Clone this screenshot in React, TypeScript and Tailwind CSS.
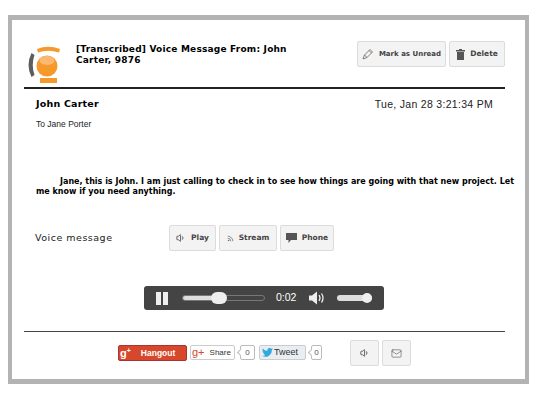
import { Rss, Volume1, Mail } from "lucide-react";
import type { ReactNode } from "react";

const sans = "font-['Liberation_Sans',Arial,sans-serif]";
const deja = "font-['DejaVu_Sans',Verdana,sans-serif]";

function ActionButton({ className, children }: { className: string; children: ReactNode }) {
  return (
    <div
      className={`flex items-center justify-center gap-[5px] rounded-[2px] border border-[#dcdcdc] bg-[#f3f3f3] font-bold whitespace-nowrap text-[#444] ${deja} ${className}`}
    >
      {children}
    </div>
  );
}

function Logo() {
  return (
    <svg width="34" height="37" viewBox="0 0 34 37" className="shrink-0">
      <path d="M9 3 Q20 -1.500 32 3 L31 6.500 Q20 3 10 6.500 Z" fill="#f39a2a" />
      <path d="M3.500 7 Q-2.500 19 3.500 31 L6.500 29 Q3 19 6.500 9 Z" fill="#5d5d5d" />
      <circle cx="19" cy="20" r="10.500" fill="#f7982a" />
      <ellipse cx="19" cy="14.500" rx="7.500" ry="4.500" fill="#fbb870" />
      <rect x="12" y="32" width="17" height="5" fill="#f39a2a" />
    </svg>
  );
}

function PencilIcon() {
  return (
    <svg width="12" height="12" viewBox="0 0 12 12" fill="none" stroke="#666" strokeWidth="0.800">
      <path d="M1 11 L2.500 7 L8 1.500 L10.500 4 L5 9.500 Z M2.500 7 L5 9.500 M7 2.500 L9.500 5" />
    </svg>
  );
}

function TrashIcon() {
  return (
    <svg width="9" height="11" viewBox="0 0 9 11" fill="#555">
      <rect x="3" y="0" width="3" height="1" />
      <rect x="0" y="1" width="9" height="1.500" />
      <rect x="1" y="3" width="7" height="8" />
    </svg>
  );
}

function PhoneBubbleIcon() {
  return (
    <svg width="11" height="10" viewBox="0 0 11 10" fill="#555">
      <path d="M0 0h11v7H5L2.500 10V7H0z" />
    </svg>
  );
}

function TwitterBird() {
  return (
    <svg width="11" height="9" viewBox="0 0 24 20">
      <path
        d="M24 2.400c-.9.400-1.800.700-2.800.800 1-.6 1.800-1.500 2.200-2.700-1 .6-2 1-3.100 1.200A4.900 4.900 0 0 0 11.900 6.200C7.800 6 4.200 4 1.700.9a4.900 4.900 0 0 0 1.500 6.600c-.8 0-1.600-.2-2.200-.6 0 2.400 1.700 4.400 3.900 4.900-.7.200-1.500.2-2.200.1.600 2 2.400 3.400 4.600 3.400A9.900 9.900 0 0 1 0 17.300 14 14 0 0 0 21.500 4.900c1-.7 1.900-1.500 2.500-2.500z"
        fill="#2fa9e0"
      />
    </svg>
  );
}

function Bubble({ n, className }: { n: string; className: string }) {
  return (
    <div
      className={`relative flex h-[15px] items-center justify-center rounded-[2px] border border-[#bbb] bg-white text-[8px] text-[#555] ${className}`}
    >
      <span className="absolute top-[4px] left-[-3px] size-[5px] rotate-45 border-b border-l border-[#bbb] bg-white" />
      <span className="relative">{n}</span>
    </div>
  );
}

export default function App() {
  return (
    <div className={`h-[400px] w-[539px] bg-white pt-[15px] pl-2 ${sans}`}>
      <div className="flex h-[369px] w-[521px] flex-col border-x-4 border-y-[5px] border-[#b3b3b3] bg-white pt-[15px] pr-[20px] pl-3">
        <div className="flex h-[54px] items-start border-b-2 border-[#222] pl-1">
          <div className="mt-[11px]">
            <Logo />
          </div>
          <div className={`mt-[9px] ml-[14px] w-[222px] text-[9px] leading-[11px] font-bold tracking-[0.2px] text-black ${deja}`}>
            [Transcribed] Voice Message From: John Carter, 9876
          </div>
          <div className="ml-auto flex gap-[3px]">
            <ActionButton className="mt-[6px] h-[26px] w-[89px] text-[7px]">
              <PencilIcon />
              Mark as Unread
            </ActionButton>
            <ActionButton className="mt-[6px] h-[26px] w-[56px] text-[7.500px]">
              <TrashIcon />
              Delete
            </ActionButton>
          </div>
        </div>

        <div className="flex items-start justify-between pt-[9px] pr-[12px] pl-[12px]">
          <div className={`text-[9.500px] leading-[12px] font-bold tracking-[0.2px] text-black ${deja}`}>John Carter</div>
          <div className="text-[10.500px] leading-[12px] tracking-[0.3px] text-[#222]">Tue, Jan 28 3:21:34 PM</div>
        </div>
        <div className="mt-[9px] pl-[12px] text-[8.500px] leading-[10px] text-[#222]">To Jane Porter</div>

        <p className={`mt-[48px] w-[496px] pl-[12px] indent-[24px] text-[8px] leading-[10px] font-bold text-black ${deja}`}>
          Jane, this is John. I am just calling to check in to see how things are going with that new project. Let me know if you need anything.
        </p>

        <div className="mt-[28px] flex items-center pl-[11px]">
          <div className={`w-[134px] text-[9.500px] font-medium tracking-[0.5px] text-[#222] ${deja}`}>Voice message</div>
          <div className="flex gap-[3px]">
            <ActionButton className="h-[26px] w-[47px] text-[7.500px]">
              <Volume1 size={10} />
              Play
            </ActionButton>
            <ActionButton className="h-[26px] w-[58px] text-[7.500px]">
              <Rss size={7} />
              Stream
            </ActionButton>
            <ActionButton className="h-[26px] w-[54px] text-[7.500px]">
              <PhoneBubbleIcon />
              Phone
            </ActionButton>
          </div>
        </div>

        {/* audio player */}
        <div className="mt-[35px] ml-[120px] flex h-6 w-[240px] items-center rounded-[3px] bg-[#444] pl-3 text-white">
          <div className="flex gap-[2px]">
            <div className="h-[13px] w-[5px] bg-[#eee]" />
            <div className="h-[13px] w-[5px] bg-[#eee]" />
          </div>
          <div className="relative ml-[14px] h-[6px] w-[83px] rounded-full border border-[#777]">
            <div className="h-full w-[38px] rounded-full bg-[#ddd]" />
            <div className="absolute top-[-4px] left-[28px] h-3 w-4 rounded-full bg-[#eee]" />
          </div>
          <div className="ml-[11px] text-[10.500px] text-white">0:02</div>
          <svg width="18" height="14" viewBox="0 0 18 14" className="ml-[13px]">
            <path d="M0 4.500h3L8 .5v13l-5-4H0z" fill="#eee" />
            <path d="M10 4q2 3 0 6M12.500 2.500q3 4.500 0 9" stroke="#eee" strokeWidth="1.300" fill="none" />
          </svg>
          <div className="relative ml-[10px] h-[6px] w-[35px] rounded-full bg-[#ddd]">
            <div className="absolute top-[-2px] right-0 size-[10px] rounded-full bg-[#eee]" />
          </div>
        </div>

        <div className="mt-[21px] flex border-t border-[#444] pt-[8px] pl-[94px]">
          <div className="mt-[5px] flex h-4 w-[69px] items-center rounded-[2px] border border-[#a33] bg-[#d6472b] pl-[1px]">
            <span className="text-[11px] leading-none font-bold text-white">
              g<sup className="text-[7px]">+</sup>
            </span>
            <span className="ml-[10px] text-[8.500px] font-bold text-white">Hangout</span>
          </div>
          <div className="mt-[5px] ml-[3px] flex h-[15px] w-[45px] items-center rounded-[2px] border border-[#ccc] bg-white pl-[1px]">
            <span className="text-[11px] leading-none text-[#d6472b]">g+</span>
            <span className="ml-[5px] text-[8px] text-[#333]">Share</span>
          </div>
          <Bubble n="0" className="mt-[5px] ml-[5px] w-[15px]" />
          <div className="mt-[5px] ml-[4px] flex h-[15px] w-[47px] items-center gap-[1px] rounded-[2px] border border-[#ccc] bg-[#e8eef2] pl-[2px]">
            <TwitterBird />
            <span className="text-[9px] font-medium text-[#333]">Tweet</span>
          </div>
          <Bubble n="0" className="mt-[5px] ml-[5px] w-[11px]" />
          <div className="ml-[28px] flex gap-[3px]">
            <ActionButton className="h-[26px] w-[29px]">
              <Volume1 size={10} />
            </ActionButton>
            <ActionButton className="h-[26px] w-[29px]">
              <Mail size={11} strokeWidth={1.200} />
            </ActionButton>
          </div>
        </div>
      </div>
    </div>
  );
}
